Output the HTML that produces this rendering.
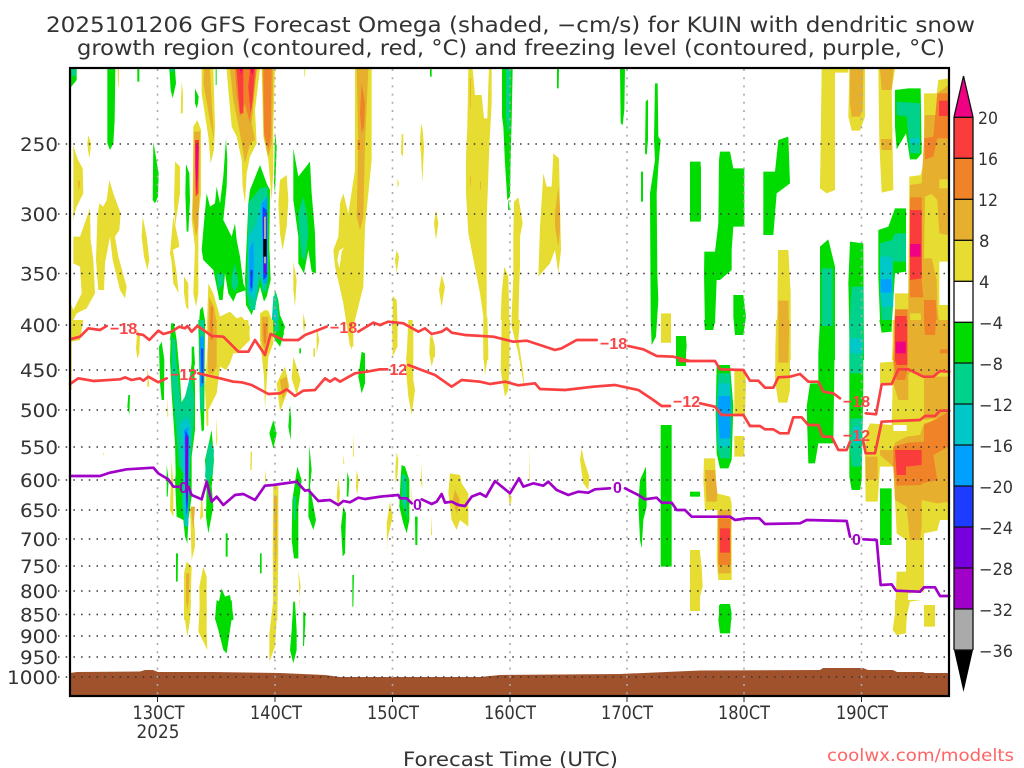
<!DOCTYPE html>
<html><head><meta charset="utf-8"><title>GFS Forecast Omega</title>
<style>
html,body{margin:0;padding:0;background:#fff;width:1024px;height:768px;overflow:hidden}
svg{display:block}
.y{fill:#e6dc32}.g{fill:#e6af2d}.o{fill:#f08228}.r{fill:#fa3c3c}.m{fill:#f00082}
.G{fill:#00dc00}.T{fill:#00d28c}.C{fill:#00c8c8}.B{fill:#00a0ff}.D{fill:#1e3cff}.P{fill:#7800dc}.V{fill:#a000c8}.A{fill:#aaa}.K{fill:#000}.W{fill:#fff}
text{font-family:"DejaVu Sans","Liberation Sans",sans-serif;fill:#333}
.ax{font-size:18.5px}.cb{font-size:16.5px}
.lr{font-family:"Liberation Sans",sans-serif;font-size:16px;font-weight:bold;fill:#fa4646}.lp{font-family:"Liberation Sans",sans-serif;font-size:16px;font-weight:bold;fill:#a000c8}
.redl{fill:none;stroke:#fa4040;stroke-width:8;stroke-linejoin:round;stroke-linecap:round}
.purl{fill:none;stroke:#a000c8;stroke-width:8;stroke-linejoin:round;stroke-linecap:round}
</style></head><body>
<svg width="1024" height="768" viewBox="0 0 1024 768" xmlns="http://www.w3.org/2000/svg">
<defs><clipPath id="pl"><rect x="70" y="68" width="879" height="628"/></clipPath></defs>
<g clip-path="url(#pl)">
<g transform="translate(60,60) scale(.33333)">
<polygon class="G" points="28,27 50,27 50,60 30,85"/><polygon class="T" points="33,27 48,27 47,48 36,50"/>
<polygon class="G" points="142,27 166,27 164,180 160,250 150,270 142,250"/>
<polygon class="y" points="173,27 177,27 176,80 174,80"/><polygon class="G" points="232,27 238,27 238,65 232,65"/>
<polygon class="y" points="85,225 93,250 92,265 88,295 84,270 82,250"/>
<polygon class="y" points="40,255 52,295 68,325 70,400 50,440 42,470 40,480"/>
<polygon class="y" points="90,445 92,540 100,600 105,700 80,745 50,760 35,790 30,790 30,725 40,750 65,700 60,620 40,610 40,530 60,530"/>
<polygon class="g" points="55,360 60,365 58,385 55,385"/>
<polygon class="y" points="148,360 160,400 182,460 178,510 165,530 175,590 200,680 195,715 180,690 158,600 150,530 135,610 132,690 115,690 108,600 112,470 118,430 130,440 140,420"/>
<polygon class="y" points="248,470 260,530 268,600 262,630 252,590 245,530"/>
<polygon class="G" points="280,245 296,340 294,410 285,430 278,420"/>
<polygon class="G" points="328,27 345,27 348,70 338,115 332,90"/><polygon class="T" points="331,27 343,27 342,35 333,35"/>
<polygon class="y" points="365,65 369,100 368,160 362,160"/>
<polygon class="G" points="405,85 416,110 414,130 410,145 405,130"/>
<polygon class="y" points="400,200 412,180 423,210 423,400 415,470 415,560 415,700 408,740 400,700 405,560 395,480 398,400"/>
<polygon class="g" points="402,215 420,215 418,400 415,500 408,530 398,470"/>
<polygon class="r" points="405,240 417,240 415,400 407,410"/><polygon class="m" points="407,250 416,260 413,350 408,400 406,320"/>
<polygon class="G" points="378,312 388,340 390,420 385,515 380,515 376,400"/>
<polygon class="y" points="345,305 360,320 360,400 345,500 342,420"/>
<polygon class="y" points="340,470 355,540 358,560 338,570 335,545 350,640 356,700 340,670 334,600 330,580"/>
<polygon class="y" points="372,650 385,670 385,750 378,740 372,700"/>
<polygon class="y" points="425,27 460,27 465,200 462,270 452,310 445,230 425,100"/><polygon class="g" points="432,27 450,27 455,130 462,240 450,180 430,70"/>
<polygon class="G" points="467,27 470,27 470,75 467,75"/>
<polygon class="y" points="500,27 600,27 585,150 590,250 570,290 560,340 555,430 548,380 545,300 530,230 515,200 505,90"/>
<polygon class="g" points="510,27 590,27 575,190 585,240 570,250 555,310 540,220 520,120"/>
<polygon class="o" points="525,27 590,27 580,110 570,190 555,130 540,170 530,100"/>
<polygon class="r" points="530,27 550,27 550,160 540,160 535,100"/><polygon class="r" points="570,27 585,27 578,120 572,160 565,80"/>
<polygon class="m" points="540,27 546,27 544,45"/><polygon class="m" points="572,27 580,27 577,45"/>
<polygon class="y" points="605,27 645,27 640,200 640,330 635,420 625,300 610,230"/><polygon class="g" points="607,27 640,27 636,250 625,290 612,230"/><polygon class="o" points="610,27 635,27 632,230 625,270 612,220"/>
<polygon class="G" points="645,215 650,260 648,320 645,400 642,370"/>
<polygon class="G" points="430,510 440,400 450,440 465,430 470,380 480,430 490,350 498,235 502,300 500,380 490,480 515,530 525,490 530,540 540,590 550,670 558,690 530,700 520,725 505,700 495,640 488,720 478,720 460,630 430,600 425,570"/>
<polygon class="T" points="470,640 490,640 490,670 475,690"/><polygon class="T" points="515,650 525,610 535,670 525,695 515,680"/>
<polygon class="G" points="570,390 600,315 620,370 630,390 628,560 632,660 620,710 612,725 600,680 590,720 575,765 558,735 555,660 565,430"/>
<polygon class="T" points="565,430 600,385 622,380 625,600 620,690 610,700 600,650 585,750 570,750 560,700"/>
<polygon class="C" points="563,530 585,500 600,440 620,395 625,650 610,690 600,640 585,720 565,700"/>
<polygon class="B" points="605,430 622,410 622,670 610,670"/><polygon class="B" points="568,570 580,540 582,640 576,700 568,690"/>
<polygon class="D" points="608,440 620,450 620,650 610,660"/><polygon class="D" points="571,630 578,630 577,690 571,680"/>
<polygon class="P" points="610,470 620,470 620,640 612,640"/><polygon class="A" points="612,470 618,470 618,540 612,540"/><polygon class="K" points="610,537 620,537 620,590 610,590"/><polygon class="A" points="612,590 618,590 618,610 612,610"/>
<polygon class="G" points="700,265 715,350 750,305 755,400 765,520 768,640 755,635 745,570 732,640 715,610 715,530 700,420"/>
<polygon class="T" points="715,460 730,410 742,470 745,520 735,600 725,590 718,520"/>
<polygon class="y" points="660,360 680,345 685,420 680,500 668,570 660,520 655,430"/>
<polygon class="y" points="700,605 710,660 705,740 700,690"/><polygon class="y" points="733,27 736,27 735,50 733,50"/>
<polygon class="G" points="645,690 655,720 660,765 675,800 660,860 645,840 635,800"/><polygon class="T" points="640,710 650,700 655,760 660,800 645,820 635,790"/><polygon class="C" points="640,750 652,750 652,810 640,800"/>
<polygon class="y" points="885,27 935,27 935,300 915,500 910,680 880,800 880,860 870,860 850,730 825,620 820,570 835,530 840,430 850,400 865,460 885,330"/>
<polygon class="W" points="832,600 838,572 852,562 845,575 842,600 838,625"/>
<polygon class="g" points="890,27 925,27 915,250 910,470 900,510 890,470 895,250"/><polygon class="o" points="905,70 915,130 912,200 905,220 900,160"/><polygon class="o" points="893,240 899,240 899,270 893,270"/>
<polygon class="y" points="730,760 736,790 732,820 729,790"/>
<polygon class="y" points="445,670 460,700 480,770 510,755 530,775 545,770 570,800 568,820 440,820"/>
<polygon class="g" points="447,710 462,740 470,790 468,820 445,820"/><polygon class="o" points="452,740 458,740 458,820 452,820"/>
<polygon class="G" points="420,750 428,740 435,780 435,820 415,820"/><polygon class="T" points="418,790 432,790 432,820 418,820"/>
<polygon class="y" points="600,760 615,750 625,752 640,790 640,830 600,830"/><polygon class="g" points="605,770 625,770 625,830 605,830"/><polygon class="o" points="610,790 620,790 620,830 610,830"/>
<polygon class="G" points="335,790 342,790 345,840 330,840"/><polygon class="T" points="335,810 342,810 343,840 332,840"/>
</g>
<g transform="translate(60,320) scale(.33333)">
<polygon class="y" points="30,0 70,0 60,60 35,65 35,210 30,210"/>
<polygon class="y" points="232,30 240,50 238,100 232,115 228,85"/>
<polygon class="G" points="297,80 305,65 313,120 312,240 305,240 300,190"/>
<polygon class="y" points="262,140 268,200 262,200"/><polygon class="y" points="322,230 325,290 322,290"/>
<polygon class="G" points="333,10 342,10 350,60 360,170 365,260 385,200 395,130 400,80 405,200 405,330 395,410 395,530 385,600 382,670 375,650 370,600 350,590 348,500 345,370 335,220 330,120"/>
<polygon class="T" points="335,50 345,60 350,130 362,250 375,230 395,150 402,240 400,320 390,430 385,610 375,620 365,550 350,350 335,180"/>
<polygon class="C" points="360,310 380,290 392,320 385,500 385,620 375,620 370,500"/>
<polygon class="B" points="372,330 385,320 385,560 378,585 375,480"/><polygon class="D" points="376,330 386,350 384,540 380,590 376,460"/><polygon class="P" points="376,350 385,350 383,500 381,560 376,500"/>
<polygon class="y" points="445,0 565,0 570,60 530,100 520,100 510,130 498,150 480,140 470,220 445,270 445,315 440,320 435,200 445,50"/>
<polygon class="g" points="445,0 470,0 470,50 470,140 460,160 445,160 443,90"/><polygon class="o" points="450,0 458,0 458,60 452,60"/>
<polygon class="G" points="415,0 435,0 433,250 432,330 425,335 420,260"/><polygon class="T" points="418,0 432,0 430,280 420,260"/><polygon class="B" points="420,50 432,50 430,200 420,200"/><polygon class="D" points="423,85 430,85 430,190 425,190"/>
<polygon class="G" points="395,80 402,80 405,130 395,170"/>
<polygon class="y" points="600,0 640,0 640,70 625,110 615,265 612,170 600,60"/><polygon class="g" points="605,0 625,0 625,70 615,100 605,60"/><polygon class="o" points="610,10 620,10 618,70 612,70"/>
<polygon class="G" points="640,0 660,0 672,40 660,80 640,50"/><polygon class="T" points="640,0 655,0 658,30 645,40"/>
<polygon class="y" points="675,140 688,200 660,275 650,190"/><polygon class="g" points="660,180 680,170 685,200 668,240"/>
<polygon class="y" points="700,110 722,180 710,225 695,175"/>
<polygon class="G" points="718,85 723,85 723,100 718,100"/><polygon class="y" points="760,85 765,85 765,110 760,110"/>
<polygon class="G" points="205,225 210,225 208,285 202,260"/><polygon class="G" points="690,255 694,300 692,360 685,320"/><polygon class="G" points="640,300 650,340 640,385 628,340"/>
<polygon class="y" points="470,290 472,360 468,380"/><polygon class="y" points="572,395 576,395 575,450 571,450"/><polygon class="y" points="129,400 132,400 131,407"/>
<polygon class="y" points="880,340 882,410 879,410"/><polygon class="y" points="850,400 853,432 850,432"/><polygon class="y" points="615,445 618,480 615,495"/>
<polygon class="G" points="455,330 462,420 455,500 460,560 445,640 438,590 440,500 435,420"/><polygon class="T" points="450,360 462,390 458,460 445,490 435,470 440,400"/>
<polygon class="G" points="320,435 326,480 323,530 320,530"/><polygon class="y" points="335,420 340,500 340,590 330,570"/><polygon class="G" points="352,430 370,460 365,560 350,590 345,480"/>
<polygon class="y" points="390,560 400,580 405,640 405,680 395,720"/><polygon class="g" points="392,560 405,560 400,630"/>
<polygon class="y" points="425,510 430,590 420,600"/>
<polygon class="G" points="497,640 503,640 503,710 497,710"/><polygon class="G" points="348,700 354,700 353,785 348,785"/><polygon class="G" points="600,700 605,700 605,760 600,760"/>
<polygon class="y" points="640,490 655,500 655,700 652,900 640,900 638,700"/><polygon class="g" points="642,530 652,530 650,700 645,770"/>
<polygon class="G" points="712,440 725,480 715,560 715,715 702,715 695,660 697,540"/><polygon class="T" points="700,530 708,530 706,600 702,600"/>
<polygon class="G" points="748,375 755,450 750,500 768,600 760,630 745,590"/>
<polygon class="y" points="715,750 722,800 718,830"/>
<polygon class="y" points="835,470 840,520 835,570 830,530"/><polygon class="G" points="850,560 858,580 855,700 848,710 843,620"/><polygon class="G" points="862,455 868,480 865,530 860,530"/><polygon class="y" points="890,450 896,480 892,525 888,500"/>
<polygon class="G" points="905,95 915,100 915,190 905,220 895,170"/><polygon class="G" points="877,765 882,765 880,860 877,860"/>
<polygon class="y" points="380,725 395,740 390,900 372,900 372,760"/><polygon class="g" points="378,760 388,760 385,880 378,880"/>
<polygon class="y" points="430,740 440,770 440,900 420,900 418,800"/>
<polygon class="G" points="485,805 495,830 510,825 520,890 520,900 465,900"/>
<polygon class="G" points="700,845 706,900 698,900"/><polygon class="G" points="730,878 735,900 730,900"/>
<polygon class="y" points="770,20 778,60 770,100"/><polygon class="y" points="865,40 880,60 875,90 868,55"/>
</g>
<g transform="translate(0,600) scale(.33333)">
<polygon class="y" points="553,0 573,0 570,60 562,110 555,60"/><polygon class="g" points="558,0 566,0 562,30"/>
<polygon class="y" points="600,0 620,0 620,100 622,150 605,115 595,95"/>
<polygon class="G" points="650,0 675,15 695,0 698,40 690,90 680,160 670,150 655,90 645,55"/>
<polygon class="y" points="820,0 832,0 830,60 825,140 808,185 808,100"/>
<polygon class="G" points="880,5 885,5 890,90 890,150 880,190 870,150 875,90"/>
<polygon class="G" points="910,35 916,40 916,70 912,138 909,138"/><polygon class="y" points="898,0 900,0 898,30"/>
</g>
<g transform="translate(380,60) scale(.33333)">
<polygon class="G" points="150,27 155,27 155,50 150,50"/>
<polygon class="y" points="265,27 278,27 285,105 305,105 312,175 322,175 325,75 327,27 335,27 335,130 328,260 320,480 320,600 320,770 310,770 300,700 265,520 258,400 258,290 262,200"/>
<polygon class="g" points="270,55 273,55 272,145 270,145"/><polygon class="g" points="270,350 273,350 272,375 270,375"/><polygon class="g" points="300,365 303,365 302,388 300,388"/>
<polygon class="G" points="366,27 398,27 395,180 392,290 390,410 382,420 375,310 370,200 366,170"/><polygon class="T" points="378,27 392,27 388,215 383,215 378,170"/>
<polygon class="G" points="385,415 390,450 384,450"/><polygon class="G" points="531,27 537,27 536,85 531,85"/>
<polygon class="G" points="720,27 735,27 733,150 728,195 722,190"/>
<polygon class="G" points="825,70 833,70 835,230 842,240 835,320 830,400 832,640 835,720 828,830 815,855 812,780 810,400 825,300 822,240"/>
<polygon class="G" points="797,125 804,118 804,240 800,285 795,280"/><polygon class="G" points="783,335 789,335 789,425 783,425"/>
<polygon class="G" points="930,305 962,305 962,485 930,485"/>
<polygon class="y" points="65,225 70,220 69,290 63,280"/><polygon class="y" points="123,190 128,210 132,260 127,370 123,280 120,250"/>
<polygon class="y" points="52,355 57,370 53,385"/><polygon class="y" points="168,450 175,490 168,540 162,490"/><polygon class="y" points="50,570 57,590 50,640 45,600"/><polygon class="y" points="185,645 195,680 185,740 177,690"/>
<polygon class="y" points="402,425 415,412 420,440 428,490 420,530 420,620 417,700 415,810 395,800 395,770 400,650 400,530"/>
<polygon class="y" points="373,620 385,650 388,780 362,780 365,700"/>
<polygon class="y" points="475,650 480,500 490,340 500,380 515,380 520,280 537,295 543,570 535,640 525,570 510,610"/>
<polygon class="g" points="525,460 535,380 540,450 540,510 535,560 525,500"/>
<polygon class="y" points="843,760 873,760 873,848 843,848"/>
<polygon class="G" points="888,830 918,830 920,860 916,900 888,900"/>
<polygon class="y" points="38,708 50,720 53,800 52,860 38,890"/><polygon class="y" points="90,780 100,800 100,900 78,900"/><polygon class="y" points="155,820 165,860 165,890 155,900 148,880"/><polygon class="y" points="310,770 322,770 325,900 310,900"/>
</g>
<g transform="translate(380,320) scale(.33333)">
<polygon class="y" points="395,0 420,0 415,60 430,160 435,215 415,100 395,20"/>
<polygon class="y" points="365,0 390,0 388,140 385,210 375,230 362,150"/>
<polygon class="y" points="36,0 50,0 52,80 38,108"/><polygon class="y" points="85,0 98,0 100,180 105,210 95,285 85,230 78,150"/><polygon class="y" points="150,45 162,80 160,120 155,140 148,100"/><polygon class="y" points="310,0 322,0 325,100 315,165 310,100"/>
<polygon class="y" points="50,395 55,420 52,470 47,490 46,450"/><polygon class="y" points="112,405 114,405 113,412"/><polygon class="y" points="125,430 127,505 123,490"/>
<polygon class="G" points="65,435 75,440 88,480 88,600 80,640 70,610 58,560 62,470"/><polygon class="T" points="65,460 80,470 80,560 85,600 65,550"/><polygon class="C" points="72,530 80,530 80,560"/>
<polygon class="y" points="30,545 38,590 22,660 22,700 20,610"/><polygon class="G" points="105,590 113,590 112,675 106,675"/><polygon class="y" points="95,500 98,560 95,540"/>
<polygon class="y" points="153,585 156,645 153,645"/><polygon class="y" points="448,380 450,480 448,480"/>
<polygon class="y" points="210,460 240,465 245,490 265,520 265,620 240,600 230,630 215,600 205,520"/><polygon class="g" points="225,510 240,540 230,580 218,540"/>
<polygon class="y" points="605,385 612,420 628,470 625,510 610,490 600,420"/><polygon class="y" points="385,520 395,530 393,550 388,550"/>
<polygon class="G" points="798,440 800,560 790,600 785,685 780,660 775,550 780,480"/>
<polygon class="G" points="842,315 875,315 875,740 842,740"/><polygon class="G" points="930,515 960,515 960,530 930,530"/>
<polygon class="y" points="930,690 960,690 960,873 930,873"/>
<polygon class="G" points="888,48 918,48 918,138 888,138"/>
<polygon class="y" points="843,0 873,0 873,68 843,68"/>
</g>
<g transform="translate(700,60) scale(.33333)">
<polygon class="G" points="0,320 3,320 3,480 0,480"/>
<polygon class="G" points="60,275 90,275 100,325 133,325 133,500 100,500 95,570 95,630 60,660 50,660 45,790 15,810 12,640 13,575 45,575 55,490 57,300"/>
<polygon class="G" points="190,335 225,335 235,240 265,230 270,370 230,400 220,525 190,525"/>
<polygon class="G" points="100,705 130,705 138,770 130,825 105,825 100,770"/>
<polygon class="y" points="234,570 265,570 272,700 272,900 226,900 226,860 232,760"/><polygon class="g" points="235,722 265,722 268,900 235,900"/>
<polygon class="y" points="365,27 445,27 445,38 405,38 405,390 380,400 360,385 362,250"/>
<polygon class="y" points="448,27 495,27 495,170 480,212 455,212 445,170"/><polygon class="g" points="450,27 490,27 488,150 480,170 455,170 450,130"/>
<polygon class="y" points="535,27 585,27 575,90 580,390 545,398 538,250"/><polygon class="g" points="540,27 580,27 575,90 545,90"/><polygon class="g" points="542,237 575,237 575,270 545,270"/>
<polygon class="G" points="585,90 625,85 662,85 665,280 650,298 630,298 618,220 590,268 585,200"/>
<polygon class="T" points="590,125 660,130 660,280 630,280 620,170 590,165"/><polygon class="C" points="630,235 660,235 660,250 630,250"/>
<polygon class="G" points="360,560 385,538 405,620 405,850 405,900 360,900 360,740"/><polygon class="T" points="365,625 398,625 398,795 365,795"/>
<polygon class="G" points="450,545 490,550 492,900 450,900 445,670"/><polygon class="T" points="455,680 490,680 490,900 450,900 450,770"/><polygon class="C" points="455,835 490,835 490,880 455,880"/>
<polygon class="G" points="535,510 565,500 585,445 618,445 618,635 585,640 578,750 575,800 545,818 540,780 535,650"/>
<polygon class="T" points="540,550 575,540 585,520 618,520 618,605 580,605 575,780 545,780 540,700"/><polygon class="C" points="540,590 575,590 580,740 545,740 540,670"/><polygon class="B" points="542,658 575,658 575,698 542,698"/>
<polygon class="y" points="628,350 662,345 672,300 672,100 710,100 715,60 746,55 746,605 718,605 718,735 746,735 746,900 575,900 585,748 585,700 625,700 625,660"/>
<polygon class="g" points="630,375 665,370 672,240 675,165 708,165 712,100 746,75 746,525 718,520 712,420 695,402 675,410 672,595 695,595 710,660 712,740 720,810 746,810 746,900 580,900 585,770 590,748 625,748 625,712 630,412"/>
<polygon class="y" points="630,760 662,760 665,810 632,810"/><polygon class="y" points="718,358 746,358 746,385 718,385"/>
<polygon class="o" points="630,412 665,412 665,660 670,712 630,712"/><polygon class="o" points="672,720 707,720 712,800 700,828 675,825 672,770"/>
<polygon class="o" points="712,100 746,100 746,235 712,235 700,290 675,298 672,235 700,230"/>
<polygon class="r" points="717,122 746,122 746,168 717,168"/><polygon class="r" points="630,450 665,450 665,655 630,660"/><polygon class="m" points="630,552 662,552 662,590 630,590"/>
<polygon class="o" points="585,748 622,748 625,900 580,900"/><polygon class="r" points="585,768 620,768 620,900 585,900"/><polygon class="m" points="587,845 617,845 617,880 587,880"/>
</g>
<g transform="translate(700,320) scale(.33333)">
<polygon class="y" points="540,128 578,125 578,0 746,0 746,600 720,600 712,632 672,640 672,815 625,820 620,900 585,900 590,755 618,755 618,660 590,640 585,540 580,440 540,440 533,545 497,545 495,420 497,340 510,310 575,315 578,190 540,190"/>
<polygon class="W" points="580,315 620,315 620,333 580,333"/>
<polygon class="g" points="582,0 746,0 746,148 720,150 705,170 672,170 632,155 625,165 625,240 595,240 580,190"/>
<polygon class="g" points="672,170 746,170 746,290 672,300"/>
<polygon class="g" points="540,390 580,390 585,368 620,350 660,345 672,310 746,290 746,545 712,550 665,540 665,620 660,660 630,660 620,560 585,540 580,440 540,405"/>
<polygon class="o" points="580,380 625,368 672,365 672,315 712,295 746,275 746,380 700,405 712,480 665,490 665,495 590,497 580,440"/>
<polygon class="r" points="585,390 665,390 665,435 618,440 618,465 590,465"/>
<polygon class="g" points="497,410 533,410 533,480 497,480"/>
<polygon class="o" points="585,0 622,0 622,150 615,180 590,180 580,120"/><polygon class="r" points="585,0 622,0 622,135 590,135 585,120"/><polygon class="m" points="587,65 617,65 617,100 587,100"/>
<polygon class="o" points="672,0 708,0 705,45 675,45"/><polygon class="o" points="720,88 746,88 746,100 720,100"/>
<polygon class="G" points="12,0 45,0 40,30 15,30"/><polygon class="G" points="103,0 135,0 130,45 105,45"/>
<polygon class="y" points="228,0 272,0 270,125 270,210 262,248 235,248 225,180"/><polygon class="g" points="235,0 268,0 265,128 235,128"/>
<polygon class="G" points="360,0 405,0 400,370 355,370 345,430 325,430 320,260 330,190 355,190 355,100"/><polygon class="T" points="365,0 398,0 398,18 365,18"/>
<polygon class="G" points="448,0 490,0 490,200 485,480 480,510 455,510 448,470"/><polygon class="T" points="448,0 490,0 488,160 450,160"/><polygon class="C" points="450,55 488,55 488,100 450,100"/>
<polygon class="T" points="452,295 488,295 485,440 455,440 450,380"/><polygon class="C" points="460,320 480,320 480,370 460,370"/>
<polygon class="G" points="538,0 575,0 575,35 545,38"/>
<polygon class="G" points="50,135 90,135 100,260 95,420 85,445 60,445 50,400 47,280"/><polygon class="T" points="55,160 90,160 95,270 90,415 60,415 52,380 50,250"/><polygon class="C" points="55,190 90,190 92,380 60,380 52,360 52,240"/><polygon class="B" points="55,228 92,228 92,355 60,355 52,280"/>
<polygon class="y" points="103,150 135,150 138,190 135,285 103,285"/><polygon class="y" points="103,348 133,348 133,410 103,410"/>
<polygon class="y" points="12,415 45,415 50,520 90,530 95,550 95,780 55,780 50,720 52,570 15,570 10,480"/>
<polygon class="g" points="15,450 45,450 52,520 50,545 20,545"/><polygon class="g" points="55,570 92,570 92,760 55,760"/><polygon class="o" points="55,595 92,595 92,735 55,735"/><polygon class="r" points="60,625 90,625 90,698 60,698"/>
<polygon class="y" points="0,700 5,740 8,800 0,830"/>
<polygon class="G" points="540,505 575,505 575,675 540,675"/>
<polygon class="G" points="57,855 90,855 95,900 57,900"/><polygon class="y" points="672,855 705,855 705,900 672,900"/>
</g>
<g transform="translate(700,600) scale(.33333)">
<polygon class="G" points="60,12 90,12 95,40 90,100 60,100 55,60"/>
<polygon class="y" points="672,15 705,15 705,80 672,80"/>
<polygon class="y" points="585,0 665,0 630,5 620,50 618,100 590,105 578,90 585,40"/>
</g>
<polygon points="70,673 77,672 140,671.5 145,670 153,670 158,672 213,672 280,673 325,675 340,677 480,677 500,675 620,674 700,670.5 820,670 823,668 863,668 868,670 893,670 897,672 923,672 925,673 949,673 949,696 70,696" fill="#a0522d"/>
</g>
<g fill="none" stroke="#333" stroke-width="1.4" stroke-dasharray="1.5 6.2">
<path d="M58 144H949M58 214H949M58 273.500H949M58 325H949M58 370H949M58 410H949M58 447H949M58 480H949M58 510H949M58 539H949M58 566H949M58 591H949M58 614.500H949M58 636H949M58 657H949M58 677H949"/>
</g>
<g fill="none" stroke="#aaa" stroke-width="1.6" stroke-dasharray="2 6.200">
<path d="M157.500 69V696M275 69V696M392.500 69V696M510 69V696M627 69V696M744 69V696M861.500 69V696"/>
</g>
<path d="M157.500 696v6M275 696v6M392.500 696v6M510 696v6M627 696v6M744 696v6M861.500 696v6" stroke="#222" stroke-width="1"/>
<g>
<g transform="translate(60,60) scale(.33333)">
<polyline class="redl" points="30,838 60,830 85,805 120,810 140,798"/>
<polyline class="redl" points="232,822 250,825 268,840 295,812 310,822 335,815 358,800 375,805 382,798 395,815 412,798 430,810 455,828 490,830 520,860 535,875 565,875 585,840 615,885 632,822 670,840 715,840 735,825 770,812 800,800"/>
<polyline class="redl" points="895,815 920,800 940,788 960,795"/>
</g>
<g transform="translate(380,60) scale(.33333)">
<polyline class="redl" points="0,795 25,785 70,790 115,815 135,805 155,822 185,815 200,805 215,818 255,825 340,830 400,845 440,842 480,855 525,870 545,865 590,840 650,840"/>
<polyline class="redl" points="745,858 790,868 830,888 880,890 930,903"/>
</g>
<g transform="translate(700,320) scale(.33333)">
<polyline class="redl" points="-60,123 0,123 45,123 60,148 130,150 150,182 175,182 195,203 220,203 235,172 270,170 300,162 325,185 355,185 370,215 400,220 420,235"/>
<polyline class="redl" points="497,280 528,283 545,193 575,192 595,148 625,148 670,170 700,170 720,153 748,155"/>
</g>
<g transform="translate(60,320) scale(.33333)">
<polyline class="redl" points="30,192 55,175 100,183 180,178 195,172 215,180 240,175 250,182 265,170 295,187 320,175"/>
<polyline class="redl" points="415,160 450,168 480,175 520,185 545,187 575,195 625,222 660,220 680,208 705,228 730,212 765,210 795,175 810,185 825,175 840,185 885,160 920,155 960,148"/>
</g>
<g transform="translate(380,320) scale(.33333)">
<polyline class="redl" points="0,148 22,148"/>
<polyline class="redl" points="85,135 125,150 165,165 215,200 245,180 300,185 330,192 375,185 415,196 465,190 480,207 555,210 640,200 705,195 775,210 820,240 845,258 870,258"/>
</g>
<g transform="translate(700,320) scale(.33333)">
<polyline class="redl" points="0,250 45,260 65,285 130,285 150,318 180,318 195,328 220,328 240,340 265,340 280,292 305,292 325,315 355,315 368,350 395,350 415,390 440,390 450,365"/>
<polyline class="redl" points="490,365 497,400 525,400 545,305 660,300 675,288 705,288 720,272 748,272"/>
</g>
<g transform="translate(60,320) scale(.33333)">
<polyline class="purl" points="30,468 120,468 150,458 200,448 280,443 295,460 325,478 340,500 355,500"/>
<polyline class="purl" points="385,500 395,525 425,538 440,485 455,545 470,530 490,555 525,525 550,522 585,540 615,497 640,495 710,485 735,512 745,510 775,543 810,540 835,555 850,543 870,547 895,533 915,537 960,530"/>
</g>
<g transform="translate(380,320) scale(.33333)">
<polyline class="purl" points="0,530 55,525 60,535 80,535 95,550"/>
<polyline class="purl" points="125,538 155,552 170,545 185,522 195,548 215,545 235,555 255,558 275,530 300,520 318,530 345,483 390,520 417,475 430,500 460,490 490,497 505,485 530,510 565,525 595,515 625,518 645,508 690,505"/>
<polyline class="purl" points="735,505 775,525 795,538 830,533 845,548 875,548 890,570 915,570 935,590 960,590"/>
</g>
<g transform="translate(700,320) scale(.33333)">
<polyline class="purl" points="0,590 90,590 105,600 140,595 178,595 195,612 300,610 320,600 440,603 450,650"/>
<polyline class="purl" points="490,658 530,660 542,795 575,793 588,812 660,815 672,802 705,802 720,828 748,828"/>
</g>
</g>
<g>
<text class="lr" x="110" y="334">−18</text>
<text class="lr" x="330" y="333">−18</text>
<text class="lr" x="600" y="349">−18</text>
<text class="lr" x="843" y="407">−18</text>
<text class="lr" x="170" y="380">−12</text>
<text class="lr" x="380" y="375">−12</text>
<text class="lr" x="673" y="407">−12</text>
<text class="lr" x="843" y="441">−12</text>
<text class="lp" x="179" y="493">0</text>
<text class="lp" x="413" y="510">0</text>
<text class="lp" x="613" y="493">0</text>
<text class="lp" x="852" y="545">0</text>
</g>
<rect x="70" y="68" width="879" height="628" fill="none" stroke="#000" stroke-width="2.200"/>
<g class="ax">
<text x="46" y="32" font-size="21" style="font-size:21px" textLength="929" lengthAdjust="spacingAndGlyphs">2025101206 GFS Forecast Omega (shaded, −cm/s) for KUIN with dendritic snow</text>
<text x="77" y="55" font-size="21" style="font-size:21px" textLength="868" lengthAdjust="spacingAndGlyphs">growth region (contoured, red, °C) and freezing level (contoured, purple, °C)</text>
<text x="20" y="151" textLength="38" lengthAdjust="spacingAndGlyphs">250</text><text x="20" y="221" textLength="38" lengthAdjust="spacingAndGlyphs">300</text><text x="20" y="280.500" textLength="38" lengthAdjust="spacingAndGlyphs">350</text>
<text x="20" y="332" textLength="38" lengthAdjust="spacingAndGlyphs">400</text><text x="20" y="377" textLength="38" lengthAdjust="spacingAndGlyphs">450</text><text x="20" y="417" textLength="38" lengthAdjust="spacingAndGlyphs">500</text>
<text x="20" y="454" textLength="38" lengthAdjust="spacingAndGlyphs">550</text><text x="20" y="487" textLength="38" lengthAdjust="spacingAndGlyphs">600</text><text x="20" y="517" textLength="38" lengthAdjust="spacingAndGlyphs">650</text>
<text x="20" y="546" textLength="38" lengthAdjust="spacingAndGlyphs">700</text><text x="20" y="573" textLength="38" lengthAdjust="spacingAndGlyphs">750</text><text x="20" y="598" textLength="38" lengthAdjust="spacingAndGlyphs">800</text>
<text x="20" y="621.500" textLength="38" lengthAdjust="spacingAndGlyphs">850</text><text x="20" y="643" textLength="38" lengthAdjust="spacingAndGlyphs">900</text><text x="20" y="664" textLength="38" lengthAdjust="spacingAndGlyphs">950</text>
<text x="7" y="684" textLength="51" lengthAdjust="spacingAndGlyphs">1000</text>
<text x="132.500" y="719" textLength="52" lengthAdjust="spacingAndGlyphs">130CT</text><text x="250" y="719" textLength="52" lengthAdjust="spacingAndGlyphs">140CT</text><text x="367" y="719" textLength="52" lengthAdjust="spacingAndGlyphs">150CT</text>
<text x="484" y="719" textLength="52" lengthAdjust="spacingAndGlyphs">160CT</text><text x="601" y="719" textLength="52" lengthAdjust="spacingAndGlyphs">170CT</text><text x="718" y="719" textLength="52" lengthAdjust="spacingAndGlyphs">180CT</text><text x="836" y="719" textLength="52" lengthAdjust="spacingAndGlyphs">190CT</text>
<text x="136.500" y="738" textLength="43" lengthAdjust="spacingAndGlyphs">2025</text>
<text x="403" y="766" style="font-size:19.5px" textLength="215" lengthAdjust="spacingAndGlyphs">Forecast Time (UTC)</text>
</g>
<text x="827" y="761" textLength="187" lengthAdjust="spacingAndGlyphs" style="fill:#ff6464;font-size:17px">coolwx.com/modelts</text>
<g>
<polygon points="963.500,76 954,117 973,117" class="m"/>
<rect x="954" y="117.300" width="19" height="41" class="r"/><rect x="954" y="158.300" width="19" height="41" class="o"/>
<rect x="954" y="199.300" width="19" height="41" class="g"/><rect x="954" y="240.300" width="19" height="41" class="y"/>
<rect x="954" y="281.300" width="19" height="41" class="W"/><rect x="954" y="322.300" width="19" height="41" class="G"/>
<rect x="954" y="363" width="19" height="41" class="T"/><rect x="954" y="404" width="19" height="41" class="C"/>
<rect x="954" y="445" width="19" height="41" class="B"/><rect x="954" y="486" width="19" height="41" class="D"/>
<rect x="954" y="527" width="19" height="41" class="P"/><rect x="954" y="568" width="19" height="41" class="V"/>
<rect x="954" y="609" width="19" height="41" class="A"/>
<polygon points="954,650 973,650 963.500,692" class="K"/>
<path d="M954 117.300H973M954 158.300H973M954 199.300H973M954 240.300H973M954 281.300H973M954 322.300H973M954 363H973M954 404H973M954 445H973M954 486H973M954 527H973M954 568H973M954 609H973M954 650H973M954 117V650M973 117V650M954 117L963.500 76L973 117" stroke="#111" stroke-width="1.300" fill="none"/>
</g>
<g class="cb">
<text x="978" y="124" textLength="20" lengthAdjust="spacingAndGlyphs">20</text><text x="978" y="165" textLength="20" lengthAdjust="spacingAndGlyphs">16</text><text x="978" y="206" textLength="20" lengthAdjust="spacingAndGlyphs">12</text>
<text x="979" y="247">8</text><text x="979" y="288">4</text>
<text x="979" y="329" textLength="24" lengthAdjust="spacingAndGlyphs">−4</text><text x="979" y="370" textLength="24" lengthAdjust="spacingAndGlyphs">−8</text>
<text x="979" y="411" textLength="34" lengthAdjust="spacingAndGlyphs">−12</text><text x="979" y="452" textLength="34" lengthAdjust="spacingAndGlyphs">−16</text><text x="979" y="493" textLength="34" lengthAdjust="spacingAndGlyphs">−20</text>
<text x="979" y="534" textLength="34" lengthAdjust="spacingAndGlyphs">−24</text><text x="979" y="575" textLength="34" lengthAdjust="spacingAndGlyphs">−28</text><text x="979" y="616" textLength="34" lengthAdjust="spacingAndGlyphs">−32</text><text x="979" y="657" textLength="34" lengthAdjust="spacingAndGlyphs">−36</text>
</g>
</svg>
</body></html>
